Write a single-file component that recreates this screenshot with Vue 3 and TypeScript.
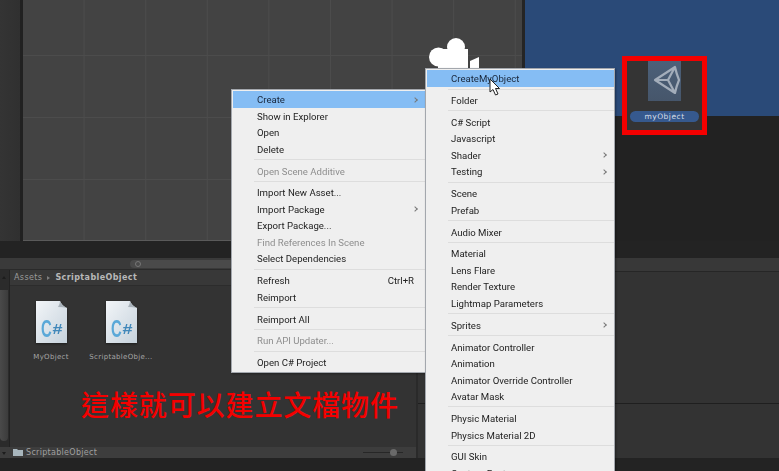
<template>
  <div class="editor">
    <section class="top">
      <div class="strip"></div>
      <div class="scene"></div>
      <div class="game">
        <div class="game-view"></div>
      </div>
    </section>
    <div class="gap"></div>
    <section class="bottom">
      <div class="project">
        <div class="search-bar"><div class="search"><span class="lens"></span></div></div>
        <div class="project-main">
          <div class="scroll">
            <i class="arrow-up"></i>
            <div class="thumb"></div>
            <i class="arrow-down"></i>
          </div>
          <div class="project-body">
            <div class="crumb">
              <span>Assets</span><i class="crumb-sep"></i><b>ScriptableObject</b>
            </div>
            <div class="assets">
              <div v-for="asset in assets" :key="asset" class="asset">
                <svg class="file" width="31" height="42" viewBox="0 0 31 42">
                  <defs>
                    <linearGradient id="page" x1="0" y1="0" x2="1" y2="1">
                      <stop offset="0" stop-color="#f2f5f8" />
                      <stop offset="1" stop-color="#c6d2dc" />
                    </linearGradient>
                  </defs>
                  <path d="M0 0H24Q26 5 31 7V42H0Z" fill="url(#page)" />
                  <path d="M24 0Q26 5 31 7Q27 6 22 6Q24 3 24 0Z" fill="#a9b2ba" />
                  <text transform="translate(5 36) scale(0.62 1)" class="file-c">C</text>
                  <text transform="translate(16.5 33) scale(1.2 1)" class="file-hash">#</text>
                </svg>
                <span>{{ asset }}</span>
              </div>
            </div>
            <p class="note">這樣就可以建立文檔物件</p>
          </div>
        </div>
        <div class="status">
          <div class="path">
            <svg width="10" height="7" viewBox="0 0 10 7"><path d="M0 0H4L5 1H10V7H0Z" fill="#a8b6bd" /></svg>
            <span>ScriptableObject</span>
          </div>
          <div class="slider"><i></i></div>
        </div>
      </div>
      <div class="inspector">
        <div class="inspector-head"></div>
        <div class="inspector-a"></div>
        <div class="inspector-b"></div>
      </div>
    </section>
    <div class="base"></div>

    <svg class="gizmo" width="52" height="34" viewBox="0 0 52 34">
      <circle cx="27" cy="10" r="9" fill="#fff" />
      <circle cx="9.5" cy="20" r="9.5" fill="#fff" />
      <rect x="9" y="12" width="30" height="22" fill="#fff" />
      <path d="M41 24L50 20V34H41Z" fill="#fff" />
    </svg>

    <div class="selected">
      <div class="tile">
        <svg width="33" height="40" viewBox="0 0 33 40">
          <path d="M7 19L27 6Q28.5 13 31 19Q28.5 25 27 32Z M7 19H20L27 6 M20 19L27 32" fill="none" stroke="#a3adba" stroke-width="2.2" stroke-linejoin="round" />
        </svg>
      </div>
      <div class="pill">myObject</div>
    </div>

    <ul class="menu menu-main">
      <template v-for="(row, i) in mainMenu" :key="i">
        <li v-if="row.sep" class="sep"></li>
        <li v-else class="row" :class="{ active: row.active, disabled: row.disabled }">
          <span>{{ row.label }}</span>
          <em v-if="row.shortcut">{{ row.shortcut }}</em>
          <i v-if="row.arrow" class="chev"></i>
        </li>
      </template>
    </ul>

    <ul class="menu menu-sub">
      <template v-for="(row, i) in subMenu" :key="i">
        <li v-if="row.sep" class="sep"></li>
        <li v-else class="row" :class="{ active: row.active, disabled: row.disabled }">
          <span>{{ row.label }}</span>
          <i v-if="row.arrow" class="chev"></i>
        </li>
      </template>
    </ul>

    <svg class="cursor" width="13" height="18" viewBox="0 0 13 18">
      <path d="M1 1V14L4 11.5L6.5 17L9 16L6.5 10.5H10.5Z" fill="#fff" stroke="#222" stroke-width="1" />
    </svg>
  </div>
</template>

<script setup lang="ts">
interface MenuRow {
  label?: string
  sep?: boolean
  active?: boolean
  disabled?: boolean
  arrow?: boolean
  shortcut?: string
}

const sep: MenuRow = { sep: true }

const assets: string[] = ['MyObject', 'ScriptableObje...']

const mainMenu: MenuRow[] = [
  { label: 'Create', active: true, arrow: true },
  { label: 'Show in Explorer' },
  { label: 'Open' },
  { label: 'Delete' },
  sep,
  { label: 'Open Scene Additive', disabled: true },
  sep,
  { label: 'Import New Asset...' },
  { label: 'Import Package', arrow: true },
  { label: 'Export Package...' },
  { label: 'Find References In Scene', disabled: true },
  { label: 'Select Dependencies' },
  sep,
  { label: 'Refresh', shortcut: 'Ctrl+R' },
  { label: 'Reimport' },
  sep,
  { label: 'Reimport All' },
  sep,
  { label: 'Run API Updater...', disabled: true },
  sep,
  { label: 'Open C# Project' }
]

const subMenu: MenuRow[] = [
  { label: 'CreateMyObject', active: true },
  sep,
  { label: 'Folder' },
  sep,
  { label: 'C# Script' },
  { label: 'Javascript' },
  { label: 'Shader', arrow: true },
  { label: 'Testing', arrow: true },
  sep,
  { label: 'Scene' },
  { label: 'Prefab' },
  sep,
  { label: 'Audio Mixer' },
  sep,
  { label: 'Material' },
  { label: 'Lens Flare' },
  { label: 'Render Texture' },
  { label: 'Lightmap Parameters' },
  sep,
  { label: 'Sprites', arrow: true },
  sep,
  { label: 'Animator Controller' },
  { label: 'Animation' },
  { label: 'Animator Override Controller' },
  { label: 'Avatar Mask' },
  sep,
  { label: 'Physic Material' },
  { label: 'Physics Material 2D' },
  sep,
  { label: 'GUI Skin' },
  { label: 'Custom Font' }
]
</script>

<style scoped>
.editor {
  position: relative;
  width: 779px;
  height: 471px;
  overflow: hidden;
  background: #232323;
  font-family: "Open Sans", "Liberation Sans", sans-serif;
}

.top {
  display: flex;
  height: 241px;
}

.strip {
  width: 20px;
  background: linear-gradient(90deg, #343434, #303030);
  border-right: 3px solid #212121;
}

.scene {
  width: 499px;
  background-color: #434343;
  background-image:
    linear-gradient(90deg, transparent 60.9px, #4c4c4c 60.9px),
    linear-gradient(180deg, transparent 61px, #4c4c4c 61px);
  background-size: 61.6px 100%, 100% 62px;
  background-position: 0 0, 0 -6px;
  border-right: 3px solid #252525;
  box-shadow: inset 0 -1px 0 #5a5a5a;
}

.game {
  flex: 1;
  background: #222;
}

.game-view {
  height: 116px;
  background: #2a4a78;
}

.gap {
  height: 17px;
}

.bottom {
  display: flex;
  height: 200px;
}

.project {
  width: 416px;
  display: flex;
  flex-direction: column;
  background: #333;
}

.search-bar {
  display: flex;
  justify-content: flex-end;
  height: 12px;
  padding: 2px 0 0 130px;
  box-sizing: border-box;
  background: #3a3a3a;
  border-bottom: 1px solid #2a2a2a;
}

.search {
  flex: 1;
  height: 8px;
  background: #4a4a4a;
  border-radius: 4px 0 0 4px;
  padding-left: 5px;
}

.lens {
  display: block;
  width: 4px;
  height: 4px;
  margin-top: 1px;
  border: 1px solid #777;
  border-radius: 50%;
}

.project-main {
  flex: 1;
  display: flex;
  min-height: 0;
}

.scroll {
  position: relative;
  width: 9px;
  background: #2b2b2b;
  border-right: 1px solid #222;
}

.thumb {
  position: absolute;
  left: 0;
  right: 1px;
  top: 20px;
  bottom: 6px;
  background: linear-gradient(90deg, #4a4a4a, #3c3c3c);
  border-radius: 0 0 4px 4px;
}

.arrow-up,
.arrow-down {
  position: absolute;
  left: 2px;
  border-left: 2px solid transparent;
  border-right: 2px solid transparent;
}

.arrow-up {
  top: 6px;
  border-bottom: 3px solid #1d1d1d;
}

.arrow-down {
  bottom: -8px;
  border-top: 3px solid #1d1d1d;
}

.project-body {
  flex: 1;
  display: flex;
  flex-direction: column;
  min-width: 0;
}

.crumb {
  display: flex;
  align-items: center;
  gap: 5px;
  height: 15px;
  padding-left: 4px;
  background: #383838;
  border-bottom: 1px solid #2c2c2c;
  font-family: "DejaVu Sans", sans-serif;
  font-size: 8px;
  letter-spacing: 0.4px;
  color: #9a9a9a;
}

.crumb b {
  color: #b8b8b8;
}

.crumb-sep {
  border-left: 3px solid #7d7d7d;
  border-top: 2px solid transparent;
  border-bottom: 2px solid transparent;
}

.assets {
  display: flex;
  gap: 30px;
  padding: 15px 0 0 21px;
}

.asset {
  position: relative;
  width: 40px;
  display: flex;
  flex-direction: column;
  align-items: center;
}

.asset span {
  margin-top: 10px;
  white-space: nowrap;
  font-family: "DejaVu Sans", sans-serif;
  font-size: 7px;
  letter-spacing: 0.3px;
  color: #a6a6a6;
}

.file {
  filter: drop-shadow(0 1px 1px #1c1c1c);
}

.file-c {
  font-family: "Liberation Sans", sans-serif;
  font-size: 24px;
  font-weight: 700;
  fill: #5aa8d8;
}

.file-hash {
  font-family: "Liberation Sans", sans-serif;
  font-size: 15px;
  font-weight: 700;
  fill: #4288ba;
}

.note {
  margin: 27px 0 0 71px;
  font-family: "Noto Sans CJK TC", sans-serif;
  font-size: 28px;
  font-weight: 500;
  line-height: 32px;
  letter-spacing: 0.9px;
  white-space: nowrap;
  color: #f40000;
}

.status {
  display: flex;
  align-items: center;
  justify-content: space-between;
  height: 11px;
  padding: 0 13px 0 13px;
  background: #3d3d3d;
}

.path {
  display: flex;
  align-items: center;
  gap: 3px;
  font-family: "DejaVu Sans", sans-serif;
  font-size: 8px;
  letter-spacing: 0.3px;
  color: #a0a0a0;
}

.slider {
  position: relative;
  width: 40px;
  height: 1px;
  background: #272727;
}

.slider i {
  position: absolute;
  left: 27px;
  top: -3px;
  width: 7px;
  height: 7px;
  border-radius: 50%;
  background: #6a6a6a;
}

.inspector {
  flex: 1;
  display: flex;
  flex-direction: column;
  border-left: 2px solid #2a2a2a;
}

.inspector-head {
  height: 13px;
  background: #383838;
  border-bottom: 1px solid #262626;
}

.inspector-a {
  height: 131px;
  background: #333;
  border-bottom: 1px solid #1f1f1f;
}

.inspector-b {
  flex: 1;
  background: #333;
}

.gizmo {
  position: absolute;
  left: 429px;
  top: 37px;
}

.selected {
  position: absolute;
  left: 622px;
  top: 56px;
  width: 75px;
  height: 69px;
  display: flex;
  flex-direction: column;
  align-items: center;
  border: 5px solid #f40000;
  background: #343434;
}

.tile {
  width: 33px;
  height: 40px;
  display: flex;
  background: linear-gradient(180deg, #4c6079, #46566b);
}

.pill {
  width: 69px;
  height: 11px;
  margin-top: 10px;
  border-radius: 6px;
  background: #36598e;
  font-family: "DejaVu Sans", sans-serif;
  font-size: 7.5px;
  line-height: 11px;
  letter-spacing: 0.5px;
  text-align: center;
  color: #d8dfe8;
}

.menu {
  position: absolute;
  margin: 0;
  padding: 1px 0 0 1px;
  list-style: none;
  box-sizing: border-box;
  background: #efefef;
  border: 1px solid #a3a7ad;
  box-shadow: 1px 1px 2px rgba(0, 0, 0, 0.35);
  font-family: Roboto, "Open Sans", sans-serif;
  font-size: 9.6px;
  color: #222;
}

.menu-main {
  left: 231px;
  top: 89px;
  width: 195px;
  height: 284px;
  --text-inset: 24px;
  --sep-inset: 21px;
}

.menu-sub {
  left: 425px;
  top: 68px;
  width: 190px;
  height: 420px;
  --text-inset: 24px;
  --sep-inset: 21px;
}

.row {
  position: relative;
  display: flex;
  align-items: center;
  justify-content: space-between;
  box-sizing: border-box;
  height: 16.5px;
  padding: 1px 6px 0 var(--text-inset);
}

.row span,
.row em {
  filter: blur(0.25px);
}

.row em {
  font-style: normal;
  margin-right: 5px;
}

.row.active {
  background: #85bdf4;
  color: #18263a;
}

.row.disabled {
  color: #8e8e8e;
}

.sep {
  height: 5.35px;
  margin-left: var(--sep-inset);
  background: linear-gradient(#ddd, #ddd) 0 2px / 100% 1px no-repeat;
}

.chev {
  position: absolute;
  right: 8px;
  top: 6.5px;
  width: 3px;
  height: 3px;
  border-top: 1px solid #777;
  border-right: 1px solid #777;
  transform: rotate(45deg);
}

.cursor {
  position: absolute;
  left: 489px;
  top: 78px;
}
</style>
